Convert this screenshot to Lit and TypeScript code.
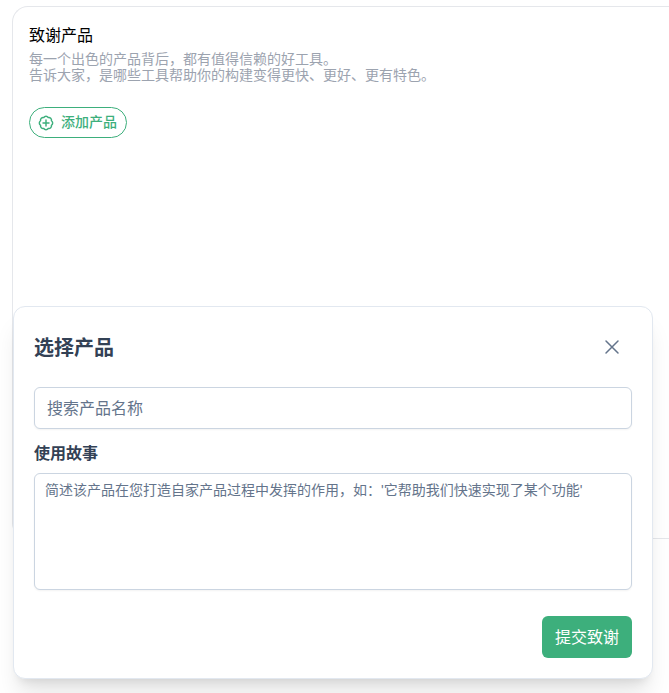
import { LitElement, html, css } from "lit";
import { customElement } from "lit/decorators.js";

const fonts = css`"Liberation Sans", "Noto Sans CJK SC", sans-serif`;

@customElement("thanks-card")
class ThanksCard extends LitElement {
  static styles = css`
    :host {
      display: block;
      box-sizing: border-box;
      min-height: 533px;
      padding: 16px;
      border: 1px solid #e5e7eb;
      border-right: 0;
      border-radius: 16px 0 0 16px;
      background: #fff;
    }
    .title {
      margin: 0;
      font-size: 16px;
      line-height: 26px;
      font-weight: 400;
      color: #000;
    }
    .desc {
      margin: 2px 0 0;
      font-size: 14px;
      line-height: 16px;
      color: #9ca3af;
    }
    .add {
      display: inline-flex;
      align-items: center;
      gap: 7px;
      height: 31px;
      margin-top: 24px;
      padding: 0 9px 0 8px;
      border: 1px solid #3daf7c;
      border-radius: 16px;
      background: #fff;
      font: 500 14px/20px ${fonts};
      color: #3daf7c;
      cursor: pointer;
    }
    .add span {
      padding-bottom: 2px;
    }
    .icon {
      width: 16px;
      height: 16px;
      fill: none;
      stroke: currentColor;
      stroke-width: 2.2;
      stroke-linecap: round;
      stroke-linejoin: round;
    }
  `;

  render() {
    return html`
      <h2 class="title">致谢产品</h2>
      <p class="desc">
        每一个出色的产品背后，都有值得信赖的好工具。<br />告诉大家，是哪些工具帮助你的构建变得更快、更好、更有特色。
      </p>
      <button class="add" type="button">
        <svg class="icon" viewBox="0 0 24 24" aria-hidden="true">
          <path
            d="M3.85 8.62a4 4 0 0 1 4.78-4.77 4 4 0 0 1 6.74 0 4 4 0 0 1 4.78 4.78 4 4 0 0 1 0 6.74 4 4 0 0 1-4.77 4.78 4 4 0 0 1-6.75 0 4 4 0 0 1-4.78-4.77 4 4 0 0 1 0-6.76Z"
          />
          <path d="M12 7.5v9M7.5 12h9" />
        </svg>
        <span>添加产品</span>
      </button>
    `;
  }
}

@customElement("product-dialog")
class ProductDialog extends LitElement {
  static styles = css`
    :host {
      display: block;
    }
    .panel {
      padding: 20px;
      border: 1px solid #e2e8f0;
      border-radius: 12px;
      background: #fff;
      box-shadow: 0 20px 25px -5px rgba(0, 0, 0, 0.1),
        0 8px 10px -6px rgba(0, 0, 0, 0.1);
      color: #334155;
    }
    .head {
      display: flex;
      align-items: center;
      justify-content: space-between;
      height: 40px;
      margin-bottom: 20px;
    }
    .title {
      margin: 0;
      padding-top: 2px;
      font-size: 20px;
      line-height: 28px;
      font-weight: 600;
    }
    .close {
      display: grid;
      place-items: center;
      width: 40px;
      height: 40px;
      padding: 0;
      border: 0;
      background: none;
      color: #64748b;
      cursor: pointer;
    }
    .x {
      width: 24px;
      height: 24px;
      fill: none;
      stroke: currentColor;
      stroke-width: 1.5;
      stroke-linecap: round;
    }
    .field {
      display: block;
      box-sizing: border-box;
      width: 100%;
      border: 1px solid #cbd5e1;
      border-radius: 6px;
      background: #fff;
      box-shadow: 0 1px 2px rgba(0, 0, 0, 0.05);
      color: #334155;
      outline: none;
    }
    .field::placeholder {
      color: #64748b;
      opacity: 1;
    }
    .search {
      height: 42px;
      padding: 2px 12px 0;
      font: 400 16px/24px ${fonts};
    }
    .label {
      display: block;
      margin: 12px 0 6px;
      font-size: 16px;
      line-height: 26px;
      font-weight: 600;
    }
    .story {
      height: 117px;
      padding: 6px 10px;
      font: 400 14px/20px ${fonts};
      resize: none;
    }
    .actions {
      display: flex;
      justify-content: flex-end;
      margin-top: 26px;
    }
    .submit {
      height: 42px;
      padding: 2px 13px 0;
      border: 0;
      border-radius: 6px;
      background: #3daf7c;
      font: 400 16px/24px ${fonts};
      color: #fff;
      cursor: pointer;
    }
  `;

  render() {
    return html`
      <form class="panel" role="dialog" aria-labelledby="title">
        <div class="head">
          <h3 class="title" id="title">选择产品</h3>
          <button class="close" type="button" aria-label="关闭">
            <svg class="x" viewBox="0 0 24 24" aria-hidden="true">
              <path d="M6 6l12 12M18 6L6 18" />
            </svg>
          </button>
        </div>
        <input
          class="field search"
          type="text"
          placeholder="搜索产品名称"
          aria-label="搜索产品名称"
        />
        <label class="label" for="story">使用故事</label>
        <textarea
          class="field story"
          id="story"
          placeholder="简述该产品在您打造自家产品过程中发挥的作用，如：'它帮助我们快速实现了某个功能'"
        ></textarea>
        <div class="actions">
          <button class="submit" type="button">提交致谢</button>
        </div>
      </form>
    `;
  }
}

@customElement("app-root")
class AppRoot extends LitElement {
  static styles = css`
    :host {
      display: block;
      box-sizing: border-box;
      position: relative;
      min-height: 100vh;
      padding: 6px 0 0 12px;
      overflow: hidden;
      background: #fff;
      font-family: ${fonts};
    }
    .overlay {
      position: absolute;
      top: 306px;
      left: 13px;
      right: 16px;
    }
  `;

  render() {
    return html`
      <thanks-card lang="zh-CN"></thanks-card>
      <product-dialog class="overlay" lang="zh-CN"></product-dialog>
    `;
  }
}
